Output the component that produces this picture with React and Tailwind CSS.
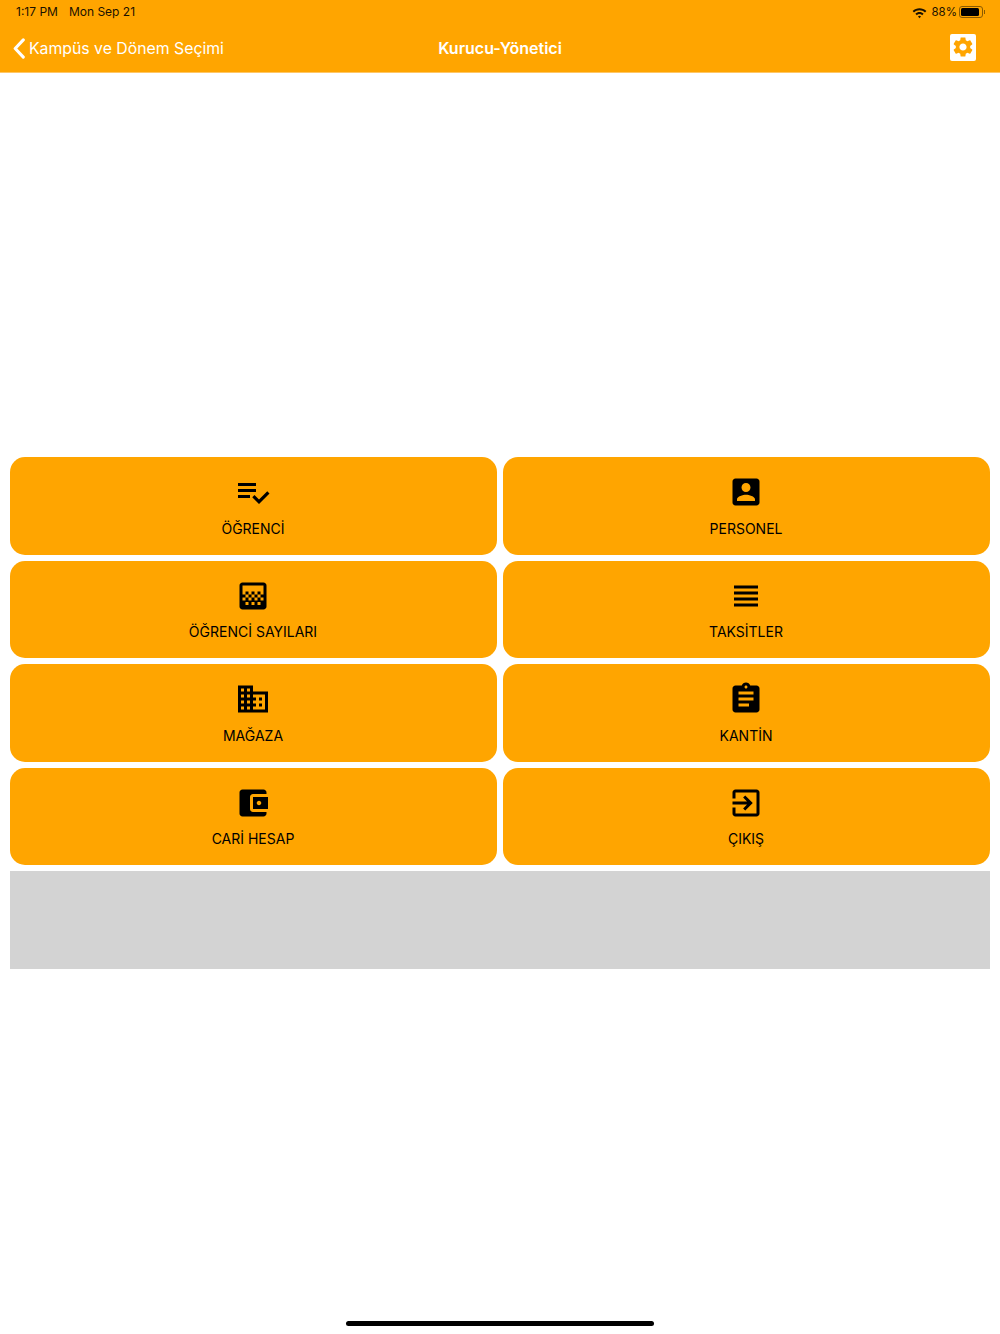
const font = { fontFamily: '"Inter", "Liberation Sans", sans-serif' };

const ICONS = {
  list: "M14 10H2v2h12v-2zm0-4H2v2h12V6zM2 16h8v-2H2v2zm19.5-4.5L23 13l-6.99 7-4.51-4.5L13 14l3.01 3 5.49-5.5z",
  person: "M3 5v14c0 1.1.89 2 2 2h14c1.1 0 2-.9 2-2V5c0-1.1-.9-2-2-2H5c-1.11 0-2 .9-2 2zm12 4c0 1.66-1.34 3-3 3s-3-1.34-3-3 1.34-3 3-3 3 1.34 3 3zm-9 8c0-2 4-3.1 6-3.1s6 1.1 6 3.1v1H6v-1z",
  gradient: "M11 9h2v2h-2zm-2 2h2v2H9zm4 0h2v2h-2zm2-2h2v2h-2zM7 9h2v2H7zm12-6H5c-1.1 0-2 .9-2 2v14c0 1.1.9 2 2 2h14c1.1 0 2-.9 2-2V5c0-1.1-.9-2-2-2zM9 18H7v-2h2v2zm4 0h-2v-2h2v2zm4 0h-2v-2h2v2zm2-7h-2v2h2v2h-2v-2h-2v2h-2v-2h-2v2H9v-2H7v2H5v-2h2v-2H5V5h14v6z",
  headline: "M4 15h16v-2H4v2zm0 4h16v-2H4v2zm0-8h16V9H4v2zm0-6v2h16V5H4z",
  domain: "M12 7V3H2v18h20V7H12zM6 19H4v-2h2v2zm0-4H4v-2h2v2zm0-4H4V9h2v2zm0-4H4V5h2v2zm4 12H8v-2h2v2zm0-4H8v-2h2v2zm0-4H8V9h2v2zm0-4H8V5h2v2zm10 12h-8v-2h2v-2h-2v-2h2v-2h-2V9h8v10zm-2-8h-2v2h2v-2zm0 4h-2v2h2v-2z",
  assignment: "M19 3h-4.18C14.4 1.84 13.3 1 12 1c-1.3 0-2.4.84-2.82 2H5c-1.1 0-2 .9-2 2v14c0 1.1.9 2 2 2h14c1.1 0 2-.9 2-2V5c0-1.1-.9-2-2-2zm-7 0c.55 0 1 .45 1 1s-.45 1-1 1-1-.45-1-1 .45-1 1-1zm2 14H7v-2h7v2zm3-4H7v-2h10v2zm0-4H7V7h10v2z",
  wallet: "M21 18v1c0 1.1-.9 2-2 2H5c-1.11 0-2-.9-2-2V5c0-1.1.89-2 2-2h14c1.1 0 2 .9 2 2v1h-9c-1.11 0-2 .9-2 2v8c0 1.1.89 2 2 2h9zm-9-2h10V8H12v8zm4-2.5c-.83 0-1.5-.67-1.5-1.5s.67-1.5 1.5-1.5 1.5.67 1.5 1.5-.67 1.5-1.5 1.5z",
  exit: "M10.09 15.59L11.5 17l5-5-5-5-1.41 1.41L12.67 11H3v2h9.67l-2.58 2.59zM19 3H5c-1.11 0-2 .9-2 2v4h2V5h14v14H5v-4H3v4c0 1.1.89 2 2 2h14c1.1 0 2-.9 2-2V5c0-1.1-.9-2-2-2z",
};

const GEAR = "M19.14 12.94c.04-.3.06-.61.06-.94 0-.32-.02-.64-.07-.94l2.03-1.58c.18-.14.23-.41.12-.61l-1.92-3.32c-.12-.22-.37-.29-.59-.22l-2.39.96c-.5-.38-1.03-.7-1.62-.94l-.36-2.54c-.04-.24-.24-.41-.48-.41h-3.84c-.24 0-.43.17-.47.41l-.36 2.54c-.59.24-1.13.57-1.62.94l-2.39-.96c-.22-.08-.47 0-.59.22L2.74 8.87c-.12.21-.08.47.12.61l2.03 1.58c-.05.3-.09.63-.09.94s.02.64.07.94l-2.03 1.58c-.18.14-.23.41-.12.61l1.92 3.32c.12.22.37.29.59.22l2.39-.96c.5.38 1.03.7 1.62.94l.36 2.54c.05.24.24.41.48.41h3.84c.24 0 .44-.17.47-.41l.36-2.54c.59-.24 1.13-.56 1.62-.94l2.39.96c.22.08.47 0 .59-.22l1.92-3.32c.12-.22.07-.47-.12-.61l-2.01-1.58zM12 15.6c-1.98 0-3.6-1.62-3.6-3.6s1.62-3.6 3.6-3.6 3.6 1.62 3.6 3.6-1.62 3.6-3.6 3.6z";

const items = [
  { label: "ÖĞRENCİ", icon: "list" },
  { label: "PERSONEL", icon: "person" },
  { label: "ÖĞRENCİ SAYILARI", icon: "gradient" },
  { label: "TAKSİTLER", icon: "headline" },
  { label: "MAĞAZA", icon: "domain" },
  { label: "KANTİN", icon: "assignment" },
  { label: "CARİ HESAP", icon: "wallet" },
  { label: "ÇIKIŞ", icon: "exit" },
];

function MenuButton({ label, icon }) {
  return (
    <div className="flex h-[97.6px] flex-col items-center rounded-[15px] bg-[#ffa500] pt-[17px] text-black">
      <svg viewBox="0 0 24 24" className="mr-[2px] h-9 w-9" fill="currentColor">
        <path d={ICONS[icon]} />
      </svg>
      <span className="mr-[1px] mt-[7.5px] text-[14px] leading-[22px]">{label}</span>
    </div>
  );
}

export default function App() {
  return (
    <div style={font} className="flex h-[1334px] flex-col bg-white">
      <header className="h-[73px] shrink-0 border-b border-[#ffc766] bg-[#ffa500]">
        <div className="flex h-6 items-center justify-between pl-4 pr-[15px] text-[12px] text-[#1a1100]">
          <div className="flex gap-[11px]">
            <span>1:17 PM</span>
            <span>Mon Sep 21</span>
          </div>
          <div className="flex items-center">
            <svg viewBox="0 0 24 24" className="h-[15px] w-[15px]" fill="currentColor">
              <path d="M1 9.5l2.2 2.3c4.9-4.8 12.7-4.800 17.6 0L23 9.5C16.900 3.600 7.100 3.600 1 9.500zm4.400 4.500l2.300 2.300c2.400-2.300 6.200-2.300 8.600 0l2.300-2.300c-3.600-3.600-9.600-3.600-13.200 0zM9.600 18.300L12 21l2.400-2.700c-1.300-1.300-3.500-1.300-4.800 0z" />
            </svg>
            <span className="ml-[4px] mr-[2px] mt-[1px] text-[11.5px]">88%</span>
            <div className="flex items-center gap-[1px]">
              <div className="flex h-[12px] w-[24px] items-center rounded-[3px] border border-[#8a5a00] p-[1px]">
                <div className="h-full w-[88%] rounded-[1.5px] bg-black" />
              </div>
              <div className="h-1 w-[1px] bg-[#8a5a00]" />
            </div>
          </div>
        </div>
        <div className="relative flex h-12 items-center justify-between pl-[12px] pr-6 text-white">
          <div className="flex items-center gap-[3px]">
            <svg viewBox="0 0 14 22" className="h-[21px] w-[14px]" fill="none" stroke="currentColor" strokeWidth="3.200" strokeLinecap="round" strokeLinejoin="round">
              <path d="M11.5 2L3 11l8.500 9" />
            </svg>
            <span className="mt-[2px] text-[15.8px]">Kampüs ve Dönem Seçimi</span>
          </div>
          <span className="absolute left-1/2 -translate-x-1/2 text-[16px] font-semibold">Kurucu-Yönetici</span>
          <div className="-mt-[2px] flex h-[27px] w-[26px] items-center justify-center rounded-[2px] bg-white">
            <svg viewBox="0 0 24 24" className="h-6 w-6" fill="#ffa500">
              <path d={GEAR} />
            </svg>
          </div>
        </div>
      </header>

      <main className="grid grid-cols-2 gap-[6px] px-[10px] pt-[384px]">
        {items.map((item) => (
          <MenuButton key={item.label} {...item} />
        ))}
        <div className="col-span-2 h-[97.6px] bg-[#d3d3d3]" />
      </main>

      <div className="mt-auto flex justify-center pb-2">
        <div className="h-[5px] w-[308px] rounded-full bg-black" />
      </div>
    </div>
  );
}
